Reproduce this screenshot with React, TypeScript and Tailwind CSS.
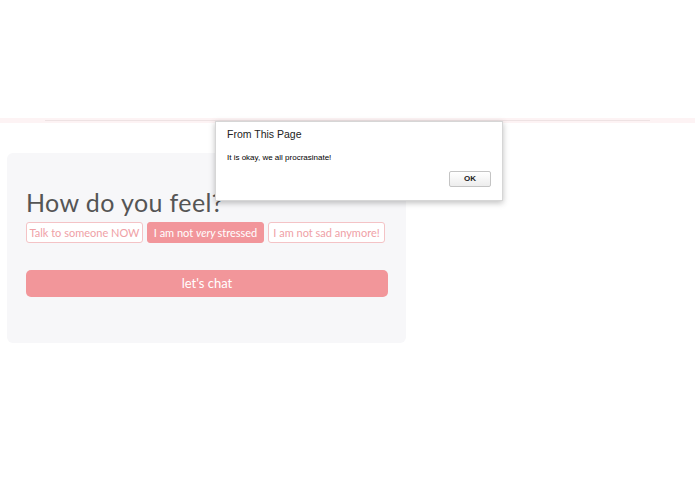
import React from "react"

const feelings = [
  { id: "talk", label: <>Talk to someone NOW</>, active: false },
  {
    id: "stress",
    label: (
      <>
        I am not <i className="mr-[2px] italic [font-synthesis:style]">very</i>stressed
      </>
    ),
    active: true,
  },
  { id: "sad", label: <>I am not sad anymore!</>, active: false },
]

export default function App() {
  return (
    <div className="relative min-h-[494px] w-full bg-white font-['Lato','Noto_Sans',sans-serif]">
      {/* Header strip */}
      <div className="h-[118px]" />
      <div className="flex h-[5px] items-center bg-[#fdf3f4]">
        <div className="mx-[45px] h-px flex-1 bg-[#eee2e3]" />
      </div>

      {/* Feeling card */}
      <div className="ml-[7px] mt-[30px] h-[190px] w-[399px] rounded-md bg-[#f7f7f9] px-[19px] pt-[31px]">
        <h1 className="text-[25px] font-normal leading-[36px] tracking-[0.4px] text-[#555]">How do you feel?</h1>
        <div className="mt-[2px] flex gap-[4px]">
          {feelings.map((f) => (
            <button
              key={f.id}
              className={`h-[21px] w-[117px] rounded-[3px] border text-center text-[11px] leading-[19px] ${
                f.active ? "border-[#f2969b] bg-[#f2969b] text-white" : "border-[#f4c3c6] bg-white text-[#efa1a6]"
              }`}
            >
              <span>{f.label}</span>
            </button>
          ))}
        </div>
        <button className="mt-[27px] flex h-[27px] w-[362px] items-center justify-center rounded-[5px] bg-[#f2969a] text-[13px] text-white">
          let's chat
        </button>
      </div>

      {/* Alert dialog */}
      <div className="absolute left-[215px] top-[121px] h-[80px] w-[288px] border border-[#d6d6d6] bg-white font-['Liberation_Sans',Arial,sans-serif] shadow-[0_2px_6px_rgba(0,0,0,0.25)]">
        <p className="ml-[11px] mt-[5px] text-[10.5px] text-[#222]">From This Page</p>
        <p className="ml-[11px] mt-[9px] text-[8px] text-black">It is okay, we all procrasinate!</p>
        <div className="mr-[11px] mt-[7px] flex justify-end">
          <button className="h-[16px] w-[42px] rounded-[2px] border border-[#c4c4c4] bg-gradient-to-b from-white to-[#ededed] text-[8px] font-bold text-[#222]">
            OK
          </button>
        </div>
      </div>
    </div>
  )
}
